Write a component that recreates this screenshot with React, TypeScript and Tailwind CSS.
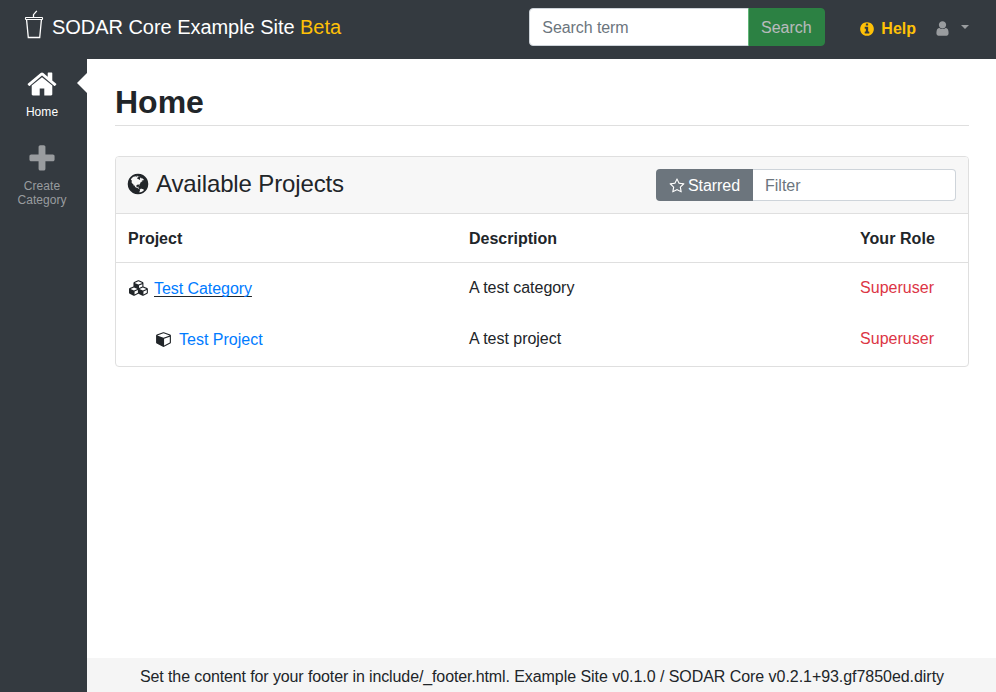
import React from "react";

const paths = {
  home: "M1472 992v480q0 26-19 45t-45 19h-384v-384h-256v384h-384q-26 0-45-19t-19-45v-480q0-1 .5-3t.5-3l575-474 575 474q1 2 1 6zm223-69l-62 74q-8 9-21 11h-3q-13 0-21-7l-692-577-692 577q-12 8-24 7-13-2-21-11l-62-74q-8-10-7-23.5t11-21.5l719-599q32-26 76-26t76 26l244 204v-195q0-14 9-23t23-9h192q14 0 23 9t9 23v408l219 182q10 8 11 21.5t-7 23.5z",
  plus: "M1600 736v192q0 40-28 68t-68 28h-416v416q0 40-28 68t-68 28h-192q-40 0-68-28t-28-68v-416h-416q-40 0-68-28t-28-68v-192q0-40 28-68t68-28h416v-416q0-40 28-68t68-28h192q40 0 68 28t28 68v416h416q40 0 68 28t28 68z",
  info: "M1152 1376v-160q0-14-9-23t-23-9h-96v-512q0-14-9-23t-23-9h-320q-14 0-23 9t-9 23v160q0 14 9 23t23 9h96v320h-96q-14 0-23 9t-9 23v160q0 14 9 23t23 9h448q14 0 23-9t9-23zm-128-896v-160q0-14-9-23t-23-9h-192q-14 0-23 9t-9 23v160q0 14 9 23t23 9h192q14 0 23-9t9-23zm640 416q0 209-103 385.500t-279.500 279.500-385.500 103-385.500-103-279.500-279.500-103-385.500 103-385.500 279.500-279.500 385.500-103 385.500 103 279.500 279.500 103 385.500z",
  user: "M1536 1399q0 109-62.500 187t-150.500 78h-854q-88 0-150.500-78t-62.500-187q0-85 8.500-160.500t31.500-152 58.500-131 94-89 134.500-34.500q131 128 313 128t313-128q76 0 134.500 34.500t94 89 58.500 131 31.500 152 8.500 160.500zm-256-887q0 159-112.500 271.500t-271.500 112.500-271.500-112.500-112.500-271.500 112.500-271.500 271.500-112.500 271.500 112.500 112.500 271.500z",
  star: "M1201 1004l306-297-422-62-189-382-189 382-422 62 306 297-73 421 378-199 377 199zm527-357q0 22-26 48l-363 354 86 500q1 7 1 20 0 50-41 50-19 0-40-12l-449-236-449 236q-22 12-40 12-21 0-31.500-14.500t-10.500-35.500q0-6 2-20l86-500-364-354q-25-27-25-48 0-37 56-46l502-73 225-455q19-41 49-41t49 41l225 455 502 73q56 9 56 46z",
  cube: "M896 1629l640-349v-636l-640 233v752zm-64-865l698-254-698-254-698 254zm832-252v768q0 35-18 65t-49 47l-704 384q-28 16-61 16t-61-16l-704-384q-31-17-49-47t-18-65v-768q0-40 23-73t61-47l704-256q22-8 44-8t44 8l704 256q38 14 61 47t23 73z",
  cubes: "M640 1632l384-192v-314l-384 164v342zm-64-454l404-173-404-173-404 173zm1088 454l384-192v-314l-384 164v342zm-64-454l404-173-404-173-404 173zm-448-293l384-165v-266l-384 164v267zm-64-379l441-189-441-189-441 189zm1088 518v416q0 36-19 67t-52 47l-448 224q-25 14-57 14t-57-14l-448-224q-5-2-7-4-2 2-7 4l-448 224q-25 14-57 14t-57-14l-448-224q-33-16-52-47t-19-67v-416q0-38 21.500-70t56.500-48l434-186v-400q0-38 21.500-70t56.500-48l448-192q23-10 50-10t50 10l448 192q35 16 56.500 48t21.500 70v400l434 186q36 16 57 48t21 70z",
  globe: "M896 128q209 0 385.500 103t279.500 279.500 103 385.500-103 385.500-279.500 279.500-385.500 103-385.500-103-279.500-279.500-103-385.500 103-385.500 279.500-279.500 385.500-103zm274 521q-2 1-9.500 9.500t-13.500 9.500q2 0 4.500-5t5-11 3.500-7q6-7 22-15 14-6 52-12 34-8 51 11-2-2 9.500-13t14.500-12q3-2 15-4.500t15-7.500l2-22q-12 1-17.500-7t-6.500-21q0 2-6 8 0-7-4.500-8t-11.500 1-9 1q-10-3-15-7.500t-8-16.500-4-15q-2-5-9.500-11t-9.500-10q-1-2-2.500-5.500t-3-6.500-4-5.500-5.500-2.500-7 5-7.500 10-4.500 5q-3-2-6-1.500t-4.500 1-4.500 3-5 3.500q-3 2-8.500 3t-8.500 2q15-5-1-11-10-4-16-3 9-4 7.500-12t-8.500-14h5q-1-4-8.500-8.500t-17.500-8.500-13-6q-8-5-34-9.500t-33-.5q-5 6-4.500 10.500t4 14 3.500 12.500q1 6-5.500 13t-6.500 12q0 7 14 15.500t10 21.500q-3 8-16 16t-16 12q-5 8-1.500 18.500t10.500 16.500q2 2 1.500 4t-3.500 4.500-5.500 4-6.500 3.500l-3 2q-11 5-20.500-6t-13.500-26q-7-25-16-30-23-8-29 1-5-13-41-26-25-9-58-4 6-1 0-15-7-15-19-12 3-6 4-17.500t1-13.500q3-13 12-23 1-1 7-8.500t9.500-13.500.5-6q35 4 50-11 5-5 11.500-17t10.500-17q9-6 14-5.500t14.500 5.500 14.500 5q14 1 15.500-11t-7.500-20q12 1 3-17-4-7-8-9-12-4-27 5-8 4 2 8-1-1-9.500 10.500t-16.500 17.500-16-5q-1-1-5.500-13.500t-9.500-13.500q-8 0-16 15 3-8-11-15t-24-8q19-12-8-27-7-4-20.500-5t-19.500 4q-5 7-5.500 11.500t5 8 10.500 5.500 11.500 4 8.500 3q14 10 8 14-2 1-8.500 3.500t-11.500 4.500-6 4q-3 4 0 14t-2 14q-5-5-9-17.500t-7-16.500q7 9-25 6l-10-1q-4 0-16 2t-20.500 1-13.500-8q-4-8 0-20 1-4 4-2-4-3-11-9.500t-10-8.500q-46 15-94 41 6 1 12-1 5-2 13-6.500t10-5.500q34-14 42-7l5-5q14 16 20 25-7-4-30-1-20 6-22 12 7 12 5 18-4-3-11.500-10t-14.500-11-15-5q-16 0-22 1-146 80-235 222 7 7 12 8 4 1 5 9t2.500 11 11.500-3q9 8 3 19 1-1 44 27 19 17 21 21 3 11-10 18-1-2-9-9t-9-4q-3 5 .5 18.500t10.500 12.500q-7 0-9.500 16t-2.500 35.500-1 23.500l2 1q-3 12 5.500 34.500t21.500 19.500q-13 3 20 43 6 8 8 9 3 2 12 7.500t15 10 10 10.500q4 5 10 22.500t14 23.500q-2 6 9.500 20t10.500 23q-1 0-2.500 1t-2.500 1q3 7 15.500 14t15.500 13q1 3 2 10t3 11 8 2q2-20-24-62-15-25-17-29-3-5-5.500-15.500t-4.500-14.500q2 0 6 1.500t8.500 3.500 7.500 4 2 3q-3 7 2 17.500t12 18.500 17 19 12 13q6 6 14 19.500t0 13.500q9 0 20 10.500t17 19.500q5 8 8 26t5 24q2 7 8.500 13.500t12.500 9.500l16 8 13 7q5 2 18.500 10.500t21.500 11.500q10 4 16 4t14.500-2.500 13.500-3.500q15-2 29 15t21 21q36 19 55 11-2 1 .5 7.500t8 15.500 9 14.500 5.500 8.500q5 6 18 15t18 15q6-4 7-9-3 8 7 20t18 10q14-3 14-32-31 15-49-18 0-1-2.500-5.500t-4-8.500-2.500-8.500 0-7.500 5-3q9 0 10-3.500t-2-12.500-4-13q-1-8-11-20t-12-15q-5 9-16 8t-16-9q0 1-1.500 5.500t-1.500 6.500q-13 0-15-1 1-3 2.500-17.500t3.500-22.500q1-4 5.500-12t7.500-14.500 4-12.500-4.500-9.500-17.500-2.500q-19 1-26 20-1 3-3 10.500t-5 11.500-9 7q-7 3-24 2t-24-5q-13-8-22.500-29t-9.500-37q0-10 2.500-26.500t3-25-5.500-24.500q3-2 9-9.500t10-10.500q2-1 4.500-1.500t4.500 0 4-1.500 3-6q-1-1-4-3-3-3-4-3 7 3 28.500-1.500t27.500 1.500q15 11 22-2 0-1-2.500-9.500t-.5-13.500q5 27 29 9 3 3 15.500 5t17.500 5q3 2 7 5.500t5.500 4.500 5-.5 8.500-6.500q10 14 12 24 11 40 19 44 7 3 11 2t4.500-9.500 0-14-1.500-12.500l-1-8v-18l-1-8q-15-3-18.500-12t1.500-18.500 15-18.500q1-1 8-3.500t15.500-6.500 12.500-8q21-19 15-35 7 0 11-9-1 0-5-3t-7.500-5-4.500-2q9-5 2-16 5-3 7.500-11t7.500-10q9 12 21 2 8-8 1-16 5-7 20.500-10.500t18.500-9.500q7 2 8-2t1-12 3-12q4-5 15-9t13-5l17-11q3-4 0-4 18 2 31-11 10-11-6-20 3-6-3-9.500t-15-5.500q3-1 11.500-.5t10.500-1.500q15-10-7-16-17-5-43 12zm-163 877q206-36 351-189-3-3-12.500-4.500t-12.500-3.500q-18-7-24-8 1-7-2.500-13t-8-9-12.500-8-11-7q-2-2-7-6t-7-5.500-7.500-4.500-8.500-2-10 1l-3 1q-3 1-5.500 2.500t-5.500 3-4 3 0 2.500q-21-17-36-22-5-1-11-5.500t-10.500-7-10-1.500-11.500 7q-5 5-6 15t-2 13q-7-5 0-17.500t2-18.500q-3-6-10.500-4.500t-12 4.500-11.500 8.500-9 6.500-8.500 5.500-8.500 7.500q-3 4-6 12t-5 11q-2-4-11.500-6.500t-9.500-5.500q2 10 4 35t5 38q7 31-12 48-27 25-29 40-4 22 12 26 0 7-8 20.500t-7 21.500q0 6 2 16z",
};

type IconProps = { name: keyof typeof paths; className: string; viewBox?: string };

function Icon({ name, className, viewBox = "0 0 1792 1792" }: IconProps) {
  return (
    <svg viewBox={viewBox} fill="currentColor" className={`shrink-0 ${className}`} aria-hidden="true">
      <path d={paths[name]} />
    </svg>
  );
}

function CupIcon() {
  return (
    <svg viewBox="0 0 20 30" fill="none" stroke="white" className="mt-px h-[30px] w-5 shrink-0" aria-hidden="true">
      <path d="M9.500 7.500V4.700L12.800.800" strokeWidth="1.300" />
      <rect x="1.500" y="7.500" width="17" height="2" rx=".5" strokeWidth="1.100" />
      <path d="M2.600 10L4.300 27.500H15.700L17.400 10" strokeWidth="1.300" />
    </svg>
  );
}

const rows = [
  { title: "Test Category", description: "A test category", category: true },
  { title: "Test Project", description: "A test project", category: false },
];

function Header() {
  return (
    <header className="flex h-[59px] shrink-0 items-start bg-[#343a40]">
      <a className="flex pt-[9px] pl-6 text-xl leading-[36px] tracking-[-0.04px] text-white">
        <CupIcon />
        <span className="ml-2 whitespace-nowrap">
          SODAR Core Example Site <span className="text-[#ffc107]">Beta</span>
        </span>
      </a>
      <form className="mt-2 ml-auto flex h-[38px]">
        <input
          placeholder="Search term"
          className="w-[220px] rounded-l border border-[#ced4da] bg-white px-3 pt-px text-base tracking-[-0.08px] text-[#495057] placeholder:text-[#6c757d]"
        />
        <button
          type="button"
          className="-ml-px w-[77px] rounded-r border border-[#28a745] bg-[#28a745] pt-px pr-px text-base text-white opacity-65"
        >
          Search
        </button>
      </form>
      <a className="mt-4 ml-[34px] flex items-center leading-6 font-bold text-[#ffc107]">
        <Icon name="info" className="size-4" />
        <span className="mt-px ml-1.5">Help</span>
      </a>
      <a className="mt-4 mr-[27px] ml-[18px] flex h-6 items-center text-[#999c9f]">
        <Icon name="user" className="size-[17px]" />
        <span className="mb-[2px] ml-[10px] border-x-[4.8px] border-t-[4.8px] border-x-transparent border-t-current" />
      </a>
    </header>
  );
}

function Sidebar() {
  return (
    <nav className="relative flex w-[87px] shrink-0 flex-col bg-[#343a40] pr-[3px] text-center text-xs leading-[14px]">
      <a className="flex flex-col items-center pt-[9px] text-white">
        <Icon name="home" className="size-8" />
        <span className="mt-[5px] tracking-[0.05px]">Home</span>
      </a>
      <a className="mt-[24px] flex flex-col items-center text-[#999c9f]">
        <Icon name="plus" className="mr-px size-8" />
        <span className="mt-[4px] w-14 tracking-[0.05px]">Create Category</span>
      </a>
      <span className="absolute top-[14px] right-0 border-y-[10px] border-r-[10px] border-y-transparent border-r-white" />
    </nav>
  );
}

function Projects() {
  return (
    <section className="mt-[30px] overflow-hidden rounded border border-[#dfdfdf]">
      <div className="flex h-[57px] items-center justify-between border-b border-[#dfdfdf] bg-[#f7f7f7] px-3">
        <h2 className="flex items-center pb-[2px] text-2xl leading-7 tracking-[-0.13px]">
          <Icon name="globe" className="mb-px -ml-[2px] size-6" />
          <span className="ml-[6px]">Available Projects</span>
        </h2>
        <div className="flex h-8">
          <button
            type="button"
            className="flex w-[97px] items-center justify-center rounded-l bg-[#6c757d] pt-px text-base tracking-[-0.05px] text-white"
          >
            <Icon name="star" className="mr-[3px] size-4" />
            Starred
          </button>
          <input
            placeholder="Filter"
            className="w-[203px] rounded-r border border-l-0 border-[#ced4da] bg-white px-3 pt-px text-base placeholder:text-[#6c757d]"
          />
        </div>
      </div>
      <table className="mb-px w-full table-fixed text-left">
        <colgroup>
          <col className="w-[341px]" />
          <col className="w-[391px]" />
          <col />
        </colgroup>
        <thead>
          <tr className="h-[48.5px] border-b border-[#dfdfdf]">
            <th className="px-3 pt-[2px]">Project</th>
            <th className="px-3 pt-[2px]">Description</th>
            <th className="px-3 pt-[2px] tracking-[0.05px]">Your Role</th>
          </tr>
        </thead>
        <tbody>
          {rows.map((row) => (
            <tr key={row.title} className="h-[51px]">
              <td className="px-3 pt-px">
                {row.category ? (
                  <div className="flex items-center">
                    <Icon name="cubes" viewBox="0 0 2304 1792" className="mb-[2px] ml-px h-4 w-5" />
                    <a className="ml-[5px] tracking-[-0.06px] text-[#007bff] underline decoration-[#212529] decoration-1 underline-offset-[2px] [text-decoration-skip-ink:none]">
                      {row.title}
                    </a>
                  </div>
                ) : (
                  <div className="flex items-center pl-7">
                    <Icon name="cube" viewBox="0 0 1664 1792" className="mb-[2px] h-4 w-[15px]" />
                    <a className="ml-2 text-[#007bff]">{row.title}</a>
                  </div>
                )}
              </td>
              <td className="px-3 pb-px tracking-[-0.03px]">{row.description}</td>
              <td className="px-3 pb-px tracking-[0.03px] text-[#dc3545]">Superuser</td>
            </tr>
          ))}
        </tbody>
      </table>
    </section>
  );
}

export default function App() {
  return (
    <div className="flex h-screen flex-col overflow-hidden bg-white font-['Liberation_Sans',Arial,sans-serif] text-base text-[#212529]">
      <Header />
      <div className="flex min-h-0 flex-1">
        <Sidebar />
        <div className="flex min-w-0 flex-1 flex-col">
          <main className="flex-1 pt-6 pr-[27px] pl-7">
            <h1 className="h-[43px] border-b border-[#dfdfdf] text-[32px] leading-[38px] font-bold">Home</h1>
            <Projects />
          </main>
          <footer className="h-[34px] bg-[#f5f5f5] pt-[7px] pl-px text-center leading-6 tracking-[-0.05px]">
            <span className="tracking-[-0.115px]">Set the content for your footer in include/_footer.html. </span>
            Example Site v0.1.0 / SODAR Core v0.2.1+93.gf7850ed.dirty
          </footer>
        </div>
      </div>
    </div>
  );
}
